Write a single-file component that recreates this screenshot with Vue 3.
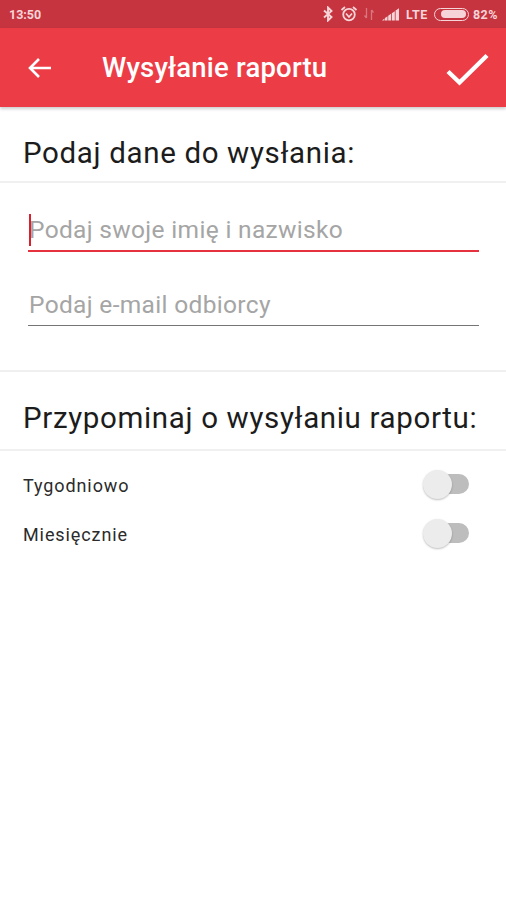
<script setup>
const toggles = ['Tygodniowo', 'Miesięcznie']
</script>

<template>
  <div class="screen">
    <div class="status">
      <span class="time">13:50</span>
      <div class="status-right">
        <svg class="ic" width="10" height="16" viewBox="0 0 10 16"><path d="M1 4.500L8.500 11L5 14.500V1.500L8.500 5L1 11.500" fill="none" stroke="#f6d5d8" stroke-width="1.900"/></svg>
        <svg class="ic alarm" width="18" height="16" viewBox="0 0 18 16"><circle cx="9" cy="8.600" r="5.800" fill="none" stroke="#f6d5d8" stroke-width="1.800"/><path d="M1.500 4L5 1M16.500 4L13 1" stroke="#f6d5d8" stroke-width="1.800"/><path d="M6 7.500L9 11L12 7.500" fill="none" stroke="#f6d5d8" stroke-width="1.700"/></svg>
        <svg class="ic data" width="12" height="16" viewBox="0 0 12 16"><path d="M3.500 2V12M1.500 9.500L3.500 12M8.500 14V4M8.500 4L10.500 6.500" fill="none" stroke="#d9777f" stroke-width="1.300"/></svg>
        <svg class="ic signal" width="18" height="14" viewBox="0 0 18 14"><path d="M0 13.500L2.500 11.500V13.500zM3 13.500V11L5.500 9.300V13.500zM6.200 13.500V8.700L9 6.800V13.500zM9.800 13.500V6.200L12.800 4.200V13.500zM13.600 13.500V3.600L17 1.300V13.500z" fill="#f6d5d8"/></svg>
        <span class="lte">LTE</span>
        <div class="battery"><div class="battery-fill"></div></div>
        <span class="pct">82%</span>
      </div>
    </div>

    <header class="toolbar">
      <svg class="back" width="26" height="24" viewBox="0 0 26 24"><path d="M24 12H3M12 3L3 12L12 21" fill="none" stroke="#fff" stroke-width="2.600"/></svg>
      <h1 class="title">Wysyłanie raportu</h1>
      <svg class="check" width="46" height="38" viewBox="0 0 46 38"><path d="M3 22.500L14.500 33.500L42 6.500" fill="none" stroke="#fff" stroke-width="4.400"/></svg>
    </header>

    <section class="heading first"><h2>Podaj dane do wysłania:</h2></section>

    <form class="fields">
      <div class="field active">
        <i class="caret"></i>
        <input type="text" placeholder="Podaj swoje imię i nazwisko" />
      </div>
      <div class="field">
        <input type="text" placeholder="Podaj e-mail odbiorcy" />
      </div>
    </form>

    <section class="heading second"><h2>Przypominaj o wysyłaniu raportu:</h2></section>

    <div class="toggles">
      <div v-for="t in toggles" :key="t" class="toggle-row">
        <span>{{ t }}</span>
        <div class="switch"><div class="knob"></div></div>
      </div>
    </div>
  </div>
</template>

<style scoped>
.screen {
  width: 506px;
  height: 900px;
  background: #fff;
  font-family: Roboto, "Noto Sans", sans-serif;
  overflow: hidden;
}
.status {
  height: 28px;
  background: #c5343f;
  display: flex;
  align-items: center;
  justify-content: space-between;
  padding: 0 8px 0 9px;
  color: #f6d5d8;
  font-size: 12.500px;
  font-weight: 700;
  box-sizing: border-box;
}
.status-right { display: flex; align-items: center; }
.ic { display: block; }
.alarm { margin-left: 7px; }
.data { margin-left: 5px; }
.signal { margin-left: 7px; }
.lte { margin-left: 6px; letter-spacing: .6px; }
.battery {
  width: 35px;
  height: 13px;
  margin-left: 6px;
  border: 1px solid #f6d5d8;
  border-radius: 7px;
  box-sizing: border-box;
  padding: 1.500px 1.500px 1.500px 6px;
}
.battery-fill { height: 100%; background: #f6d5d8; border-radius: 4px; }
.pct { margin-left: 4px; letter-spacing: .5px; }
.toolbar {
  height: 79px;
  background: #ec3c46;
  display: flex;
  align-items: center;
  padding: 0 15px 0 27px;
  box-shadow: 0 2px 3px rgba(0,0,0,.2);
  position: relative;
}
.back { display: block; }
.title {
  margin: 0 0 0 49px;
  flex: 1;
  color: #fff;
  font-size: 27.500px;
  font-weight: 500;
  letter-spacing: .2px;
}
.check { display: block; }
.heading {
  height: 76px;
  display: flex;
  align-items: center;
  padding: 17px 23px 0;
  box-sizing: border-box;
  border-bottom: 2px solid #f0f0f0;
}
.heading h2 { margin: 0; font-size: 29.500px; font-weight: 400; color: #1c1c1c; white-space: nowrap; letter-spacing: .65px; }
.heading.second { height: 81px; padding-top: 14px; border-top: 2px solid #f0f0f0; }
.fields { padding: 24px 27px 0 28px; height: 187px; box-sizing: border-box; }
.field { height: 45px; border-bottom: 1.500px solid #757575; position: relative; margin-bottom: 29px; box-sizing: border-box; }
.field.active { border-bottom: 2px solid #e5323e; }
.caret { position: absolute; left: 1px; top: 7px; width: 2px; height: 32px; background: #d9202c; }
.field input {
  width: 100%;
  height: 100%;
  border: 0;
  outline: 0;
  padding: 2px 0 0 1px;
  background: transparent;
  font: 400 24.500px Roboto, sans-serif;
  letter-spacing: .33px;
  box-sizing: border-box;
}
.field input::placeholder { color: #a5a5a5; opacity: 1; }
.toggles { padding-top: 10px; }
.toggle-row {
  height: 49px;
  display: flex;
  align-items: center;
  justify-content: space-between;
  padding: 0 37px 0 23px;
  font-size: 18px;
  letter-spacing: .9px;
  color: #2b2b2b;
}
.switch { width: 45px; height: 20px; margin-top: -3px; background: #bdbdbd; border-radius: 10px; position: relative; }
.knob {
  position: absolute;
  left: -1px;
  top: -4px;
  width: 29px;
  height: 29px;
  border-radius: 50%;
  background: #ececec;
  box-shadow: 0 1px 2px rgba(0,0,0,.25);
}
</style>
